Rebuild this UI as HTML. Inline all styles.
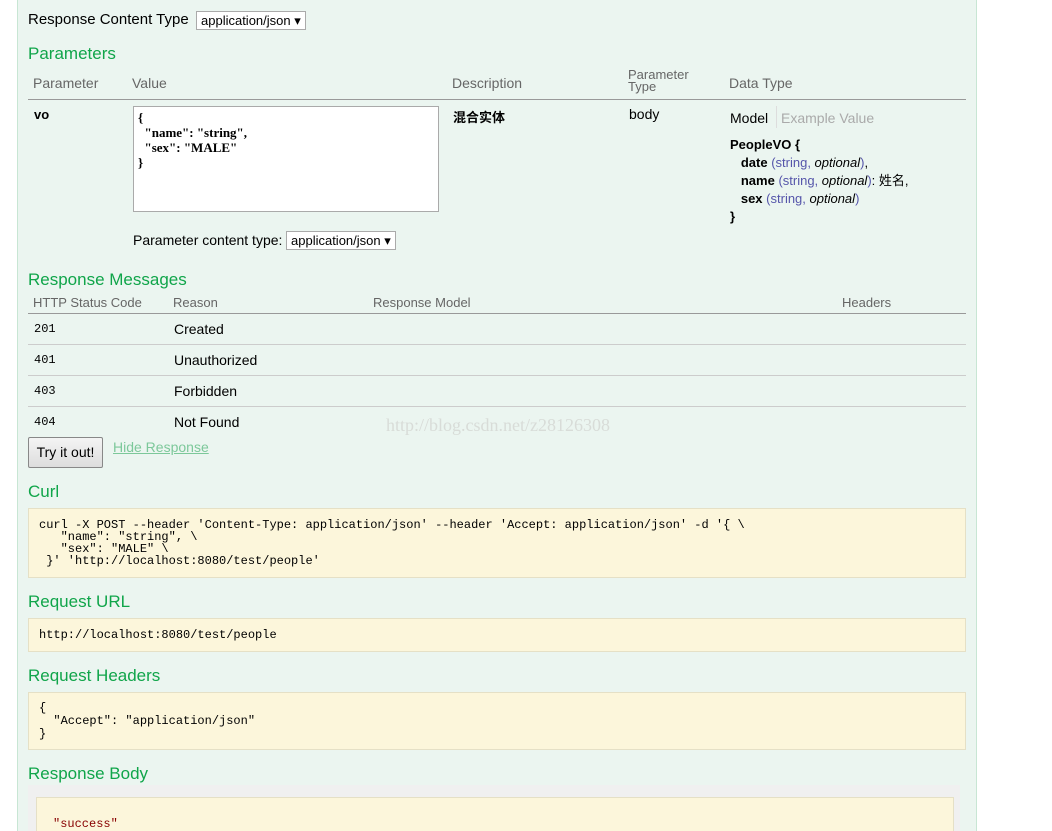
<!DOCTYPE html>
<html><head><meta charset="utf-8"><style>
*{margin:0;padding:0;box-sizing:border-box}
html,body{width:1052px;height:831px;overflow:hidden}
body{background:#fff;position:relative;font-family:"Liberation Sans","Noto Sans CJK SC",sans-serif;font-size:14px;color:#000}
#c{position:absolute;left:17px;top:-2px;width:960px;height:833px;background:#ebf5f0;border-left:1px solid #c8e6d4;border-right:1px solid #c8e6d4}
.a{position:absolute;white-space:nowrap}
.h{color:#10a54a;font-size:17px}
.th{color:#666;font-size:14px}
.sel{position:absolute;background:#fff;border:1px solid #aaa;font-size:13px;padding:1px 4px;height:19px;line-height:16px}
.mono{font-family:"Liberation Mono",monospace;font-size:12px}
.box{position:absolute;left:28px;width:938px;background:#fcf6db;border:1px solid #e5e0c6}
.line{position:absolute;left:28px;width:938px;height:1px;background:#ccc}
.o{color:#55a}
</style></head><body>
<div id="c"></div>
<div class="a" style="left:28px;top:11px;font-size:15px">Response Content Type</div>
<div class="sel" style="left:196px;top:11px">application/json ▾</div>
<div class="a h" style="left:28px;top:44px">Parameters</div>
<div class="a th" style="left:33px;top:75px">Parameter</div>
<div class="a th" style="left:132px;top:75px">Value</div>
<div class="a th" style="left:452px;top:75px">Description</div>
<div class="a th" style="left:628px;top:69px;line-height:12px;font-size:13px">Parameter<br>Type</div>
<div class="a th" style="left:729px;top:75px">Data Type</div>
<div class="a" style="left:28px;top:99px;width:938px;height:1px;background:#999"></div>
<div class="a" style="left:34px;top:107px;font-weight:bold;font-size:13px">vo</div>
<div class="a" style="left:133px;top:106px;width:306px;height:106px;background:#fff;border:1px solid #aaa;padding:3px 4px;font-family:'Liberation Serif',serif;font-weight:bold;font-size:13px;line-height:15px;white-space:pre">{
  "name": "string",
  "sex": "MALE"
}</div>
<div class="a" style="left:133px;top:232px;font-size:14px">Parameter content type:</div>
<div class="sel" style="left:286px;top:231px">application/json ▾</div>
<div class="a" style="left:453px;top:107px;font-weight:bold;font-size:13px">混合实体</div>
<div class="a" style="left:629px;top:106px">body</div>
<div class="a" style="left:730px;top:110px">Model</div>
<div class="a" style="left:776px;top:106px;width:1px;height:22px;background:#ddd"></div>
<div class="a" style="left:781px;top:110px;color:#aaa">Example Value</div>
<div class="a" style="left:730px;top:136px;font-size:13px;line-height:18px">
<b>PeopleVO {</b><br>
&nbsp;&nbsp;&nbsp;<b>date</b> <span class="o">(string, </span><i>optional</i><span class="o">)</span>,<br>
&nbsp;&nbsp;&nbsp;<b>name</b> <span class="o">(string, </span><i>optional</i><span class="o">)</span>: 姓名,<br>
&nbsp;&nbsp;&nbsp;<b>sex</b> <span class="o">(string, </span><i>optional</i><span class="o">)</span><br>
<b>}</b></div>
<div class="a h" style="left:28px;top:270px">Response Messages</div>
<div class="a th" style="left:33px;top:295px;font-size:13px">HTTP Status Code</div>
<div class="a th" style="left:173px;top:295px;font-size:13px">Reason</div>
<div class="a th" style="left:373px;top:295px;font-size:13px">Response Model</div>
<div class="a th" style="left:842px;top:295px;font-size:13px">Headers</div>
<div class="a" style="left:28px;top:313px;width:938px;height:1px;background:#999"></div>
<div class="a mono" style="left:34px;top:322px">201</div><div class="a" style="left:174px;top:321px">Created</div>
<div class="line" style="top:344px"></div>
<div class="a mono" style="left:34px;top:353px">401</div><div class="a" style="left:174px;top:352px">Unauthorized</div>
<div class="line" style="top:375px"></div>
<div class="a mono" style="left:34px;top:384px">403</div><div class="a" style="left:174px;top:383px">Forbidden</div>
<div class="line" style="top:406px"></div>
<div class="a mono" style="left:34px;top:415px">404</div><div class="a" style="left:174px;top:414px">Not Found</div>
<div class="a" style="left:386px;top:415px;font-family:'Liberation Serif',serif;font-size:18px;color:#d8dcd8">http://blog.csdn.net/z28126308</div>
<div class="a" style="left:28px;top:437px;width:75px;height:31px;border:1px solid #888;border-radius:2px;background:linear-gradient(#f4f4f4,#ddd);font-size:14px;line-height:29px;text-align:center">Try it out!</div>
<div class="a" style="left:113px;top:439px;color:#7cc89a;text-decoration:underline">Hide Response</div>
<div class="a h" style="left:28px;top:482px">Curl</div>
<div class="box mono" style="top:508px;height:70px;padding:10px;line-height:12px;white-space:pre">curl -X POST --header 'Content-Type: application/json' --header 'Accept: application/json' -d '{ \
   "name": "string", \
   "sex": "MALE" \
 }' 'http://localhost:8080/test/people'</div>
<div class="a h" style="left:28px;top:592px">Request URL</div>
<div class="box mono" style="top:618px;height:34px;padding:9px 10px">http://localhost:8080/test/people</div>
<div class="a h" style="left:28px;top:666px">Request Headers</div>
<div class="box mono" style="top:692px;height:58px;padding:9px 10px;line-height:13px;white-space:pre">{
  "Accept": "application/json"
}</div>
<div class="a h" style="left:28px;top:764px">Response Body</div>
<div class="a" style="left:28px;top:785px;width:932px;height:60px;background:#f0f0f0"></div>
<div class="a mono" style="left:36px;top:797px;width:918px;height:50px;background:#fcf6db;border:1px solid #e5e0c6;padding:19px 16px;color:#800">"success"</div>
</body></html>
